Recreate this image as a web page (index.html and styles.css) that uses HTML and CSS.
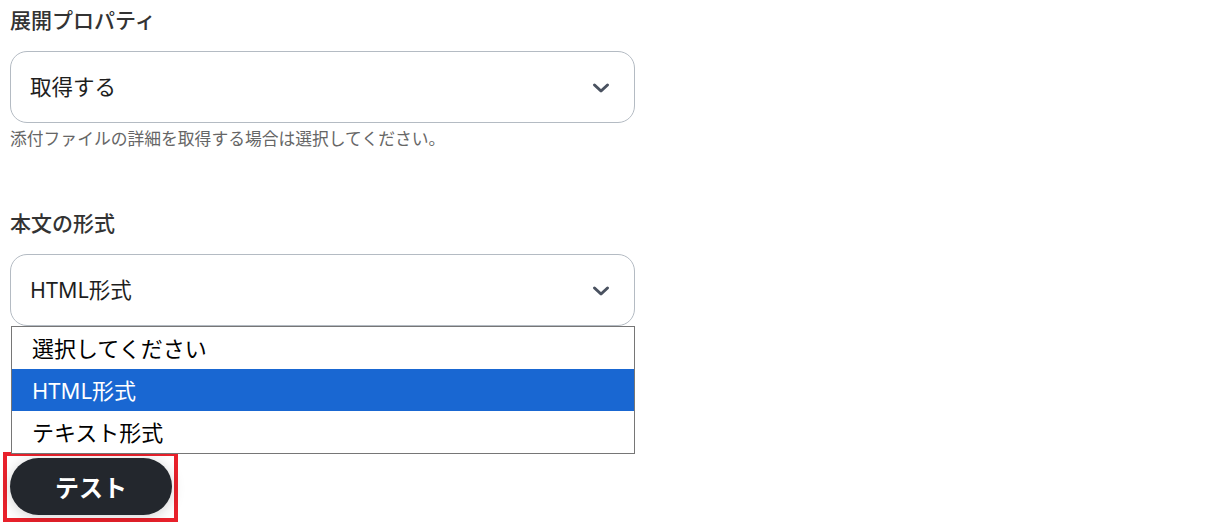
FILE: index.html
```html
<!DOCTYPE html>
<html lang="ja">
<head>
<meta charset="utf-8">
<link rel="stylesheet" href="styles.css">
</head>
<body>
<div class="page">
  <div class="field">
    <div class="label">展開プロパティ</div>
    <div class="select-wrap">
      <div class="select">
        <span class="value">取得する</span>
        <svg class="chev" width="18" height="12" viewBox="0 0 18 12"><path d="M2.5 3 L9 9 L15.5 3" fill="none" stroke="#4a5260" stroke-width="3" stroke-linecap="round" stroke-linejoin="round"/></svg>
      </div>
    </div>
    <div class="help">添付ファイルの詳細を取得する場合は選択してください。</div>
  </div>
  <div class="field field2">
    <div class="label">本文の形式</div>
    <div class="select-wrap">
      <div class="select">
        <span class="value">HTML形式</span>
        <svg class="chev" width="18" height="12" viewBox="0 0 18 12"><path d="M2.5 3 L9 9 L15.5 3" fill="none" stroke="#4a5260" stroke-width="3" stroke-linecap="round" stroke-linejoin="round"/></svg>
      </div>
      <div class="dropdown">
        <div class="option">選択してください</div>
        <div class="option selected">HTML形式</div>
        <div class="option">テキスト形式</div>
      </div>
    </div>
  </div>
  <div class="actions">
    <span class="highlight"><button class="btn">テスト</button></span>
  </div>
</div>
</body>
</html>
```
FILE: styles.css
```css
html, body {
  margin: 0;
  padding: 0;
  background: #fff;
}
body {
  font-family: "Noto Sans", "Noto Sans CJK JP", sans-serif;
  color: #222;
}
.page {
  width: 625px;
  padding: 5px 0 0 10px;
}
.label {
  font-size: 21px;
  line-height: 30px;
  font-weight: 500;
  color: #333;
  margin-bottom: 16px;
}
.select-wrap {
  position: relative;
}
.select {
  box-sizing: border-box;
  height: 72px;
  border: 1px solid #b4bbc3;
  border-radius: 17px;
  padding: 0 24px 0 19px;
  display: flex;
  align-items: center;
  justify-content: space-between;
  background: #fff;
}
.value {
  font-size: 21.5px;
  color: #1e1e1e;
  margin-bottom: 3px;
}
.chev {
  display: block;
  margin-top: 2px;
}
.help {
  margin-top: 4px;
  font-size: 16.8px;
  line-height: 24px;
  color: #666;
}
.field2 {
  margin-top: 57px;
}
.dropdown {
  position: absolute;
  top: 100%;
  left: 1px;
  right: 0;
  border: 1px solid #767676;
  background: #fff;
  z-index: 2;
}
.option {
  height: 42px;
  line-height: 42px;
  padding-left: 20px;
  font-size: 22px;
  color: #000;
}
.option.selected {
  background: #1967d2;
  color: #fff;
}
.actions {
  margin-top: 126px;
}
.highlight {
  display: inline-block;
  margin-left: -7px;
  border: 4px solid #e8212b;
  padding: 2px 2px 3px 3px;
}
.btn {
  display: block;
  width: 162px;
  height: 57px;
  border: none;
  border-radius: 29px;
  background: #23272d;
  color: #fff;
  font-family: "Noto Sans", "Noto Sans CJK JP", sans-serif;
  font-size: 24px;
  font-weight: 700;
  box-shadow: 0 2px 14px rgba(0, 0, 0, 0.18);
  padding: 0;
}
```
